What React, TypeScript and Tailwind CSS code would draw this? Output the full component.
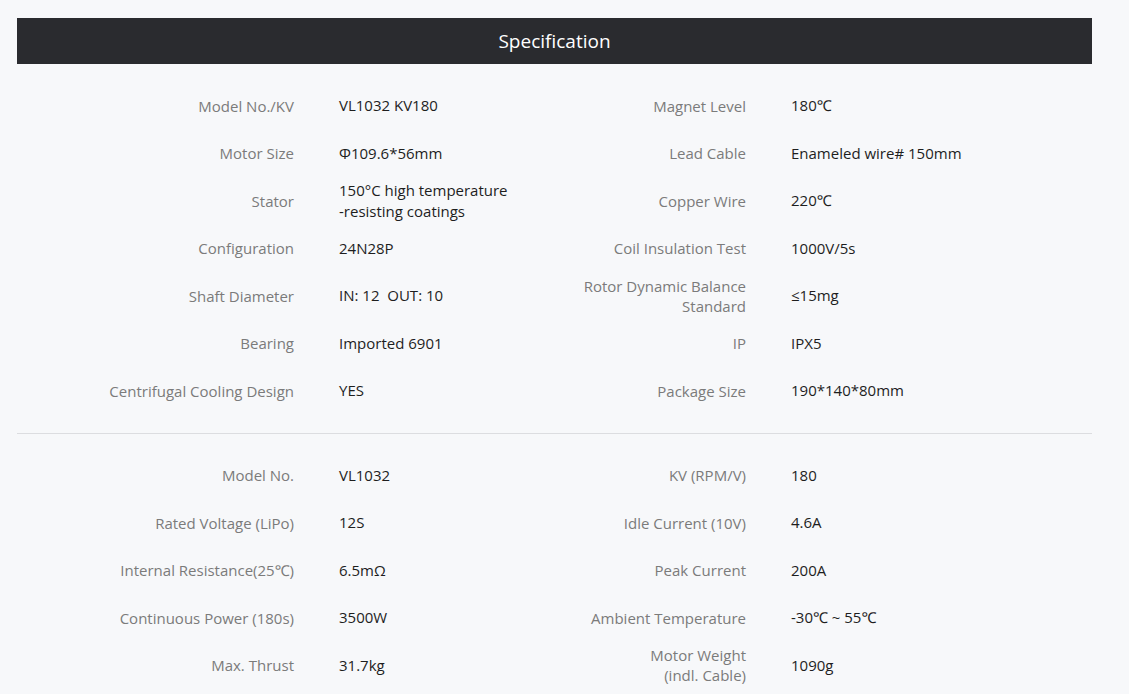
import React from 'react';

type Row = { label: React.ReactNode; value: React.ReactNode };

const general: [Row, Row][] = [
  [
    { label: 'Model No./KV', value: 'VL1032 KV180' },
    { label: 'Magnet Level', value: '180℃' },
  ],
  [
    { label: 'Motor Size', value: 'Φ109.6*56mm' },
    { label: 'Lead Cable', value: 'Enameled wire# 150mm' },
  ],
  [
    {
      label: 'Stator',
      value: (
        <>
          150°C high temperature
          <br />
          -resisting coatings
        </>
      ),
    },
    { label: 'Copper Wire', value: '220℃' },
  ],
  [
    { label: 'Configuration', value: '24N28P' },
    { label: 'Coil Insulation Test', value: '1000V/5s' },
  ],
  [
    { label: 'Shaft Diameter', value: 'IN: 12  OUT: 10' },
    {
      label: (
        <>
          Rotor Dynamic Balance
          <br />
          Standard
        </>
      ),
      value: '≤15mg',
    },
  ],
  [
    { label: 'Bearing', value: 'Imported 6901' },
    { label: 'IP', value: 'IPX5' },
  ],
  [
    { label: 'Centrifugal Cooling Design', value: 'YES' },
    { label: 'Package Size', value: '190*140*80mm' },
  ],
];

const performance: [Row, Row][] = [
  [
    { label: 'Model No.', value: 'VL1032' },
    { label: 'KV (RPM/V)', value: '180' },
  ],
  [
    { label: 'Rated Voltage (LiPo)', value: '12S' },
    { label: 'Idle Current (10V)', value: '4.6A' },
  ],
  [
    { label: 'Internal Resistance(25℃)', value: '6.5mΩ' },
    { label: 'Peak Current', value: '200A' },
  ],
  [
    { label: 'Continuous Power (180s)', value: '3500W' },
    { label: 'Ambient Temperature', value: '-30℃ ~ 55℃' },
  ],
  [
    { label: 'Max. Thrust', value: '31.7kg' },
    {
      label: (
        <>
          Motor Weight
          <br />
          (indl. Cable)
        </>
      ),
      value: '1090g',
    },
  ],
];

function Cell({ row, wide }: { row: Row; wide?: boolean }) {
  return (
    <div className={`flex items-center ${wide ? 'w-[452px] shrink-0' : 'flex-1'}`}>
      <div className="w-[277px] shrink-0 text-right text-[#7b7b7b] leading-[20px]">{row.label}</div>
      <div className="ml-[45px] text-[#1e1e1e] leading-[21px] whitespace-pre">{row.value}</div>
    </div>
  );
}

function Section({ rows }: { rows: [Row, Row][] }) {
  return (
    <div className="flex flex-col py-[18px]">
      {rows.map(([a, b], i) => (
        <div key={i} className="flex h-[47.5px]">
          <Cell row={a} wide />
          <Cell row={b} />
        </div>
      ))}
    </div>
  );
}

export default function App() {
  return (
    <div
      className="min-h-screen bg-[#f7f8fa] pt-[18px] text-[15px]"
      style={{ fontFamily: '"Open Sans", "Noto Sans", sans-serif' }}
    >
      <div className="ml-[17px] w-[1075px]">
        <div className="flex h-[46px] items-center justify-center bg-[#2a2b2f] text-[19px] text-white">
          Specification
        </div>
        <Section rows={general} />
        <div className="h-px bg-[#dcdde0]" />
        <Section rows={performance} />
      </div>
    </div>
  );
}
